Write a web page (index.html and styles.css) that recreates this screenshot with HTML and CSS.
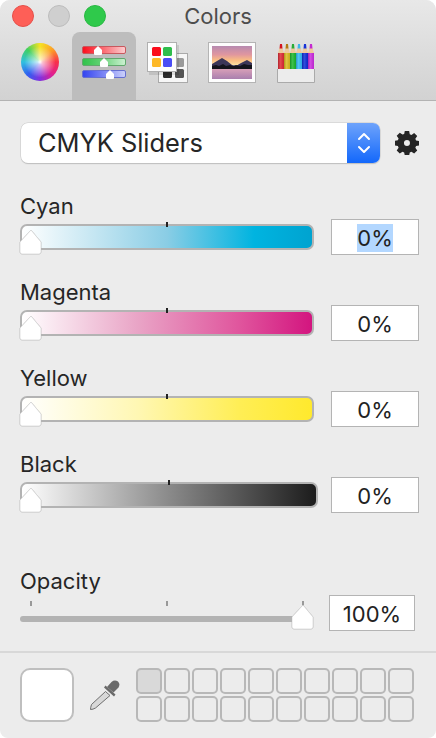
FILE: index.html
```html
<!DOCTYPE html>
<html lang="en">
<head>
<meta charset="utf-8">
<title>Colors</title>
<link rel="stylesheet" href="styles.css">
</head>
<body>
<main class="window">
  <header class="toolbar">
    <div class="titlebar">
      <div class="lights">
        <span class="light red"></span>
        <span class="light grey"></span>
        <span class="light green"></span>
      </div>
      <div class="title">Colors</div>
    </div>
    <nav class="tabs">
      <div class="tab tab-wheel"><span class="wheel"></span></div>
      <div class="tab tab-sliders active">
        <svg width="44" height="34" viewBox="0 0 44 34">
          <defs>
            <linearGradient id="r" x1="0" x2="1"><stop offset="0" stop-color="#fb0d1c"/><stop offset=".4" stop-color="#fb5a62"/><stop offset="1" stop-color="#fcd0d2"/></linearGradient>
            <linearGradient id="g" x1="0" x2="1"><stop offset="0" stop-color="#2fc24a"/><stop offset=".4" stop-color="#5ed070"/><stop offset="1" stop-color="#cdf1d2"/></linearGradient>
            <linearGradient id="b" x1="0" x2="1"><stop offset="0" stop-color="#3344f0"/><stop offset=".5" stop-color="#7d87f5"/><stop offset="1" stop-color="#cdd2fb"/></linearGradient>
          </defs>
          <rect x="0.5" y="0.5" width="43" height="7" rx="1.5" fill="url(#r)" stroke="#c8585e"/>
          <rect x="0.5" y="12.5" width="43" height="7" rx="1.5" fill="url(#g)" stroke="#62a86e"/>
          <rect x="0.5" y="24.5" width="43" height="7" rx="1.5" fill="url(#b)" stroke="#6670d0"/>
          <path d="M16 0l4 4v4a1 1 0 0 1-1 1h-6a1 1 0 0 1-1-1V4z" fill="#fff"/>
          <path d="M22 12l4 4v4a1 1 0 0 1-1 1h-6a1 1 0 0 1-1-1v-4z" fill="#fff"/>
          <path d="M28 24l4 4v4a1 1 0 0 1-1 1h-6a1 1 0 0 1-1-1v-4z" fill="#fff"/>
        </svg>
      </div>
      <div class="tab tab-palettes">
        <svg width="42" height="42" viewBox="0 0 42 42">
          <rect x="11.500" y="11.500" width="29" height="29" fill="#f6f6f6" stroke="#a9a9a9"/>
          <rect x="28" y="16" width="9" height="9" rx="1.500" fill="#9a9a9a"/>
          <rect x="16" y="27" width="9" height="9" rx="1.500" fill="#2c2c2c"/>
          <rect x="28" y="27" width="9" height="9" rx="1.500" fill="#555"/>
          <rect x="2" y="3" width="30" height="30" fill="#000" opacity=".1"/>
          <rect x="0.500" y="0.500" width="29" height="29" fill="#fdfdfd" stroke="#b0b0b0"/>
          <rect x="5" y="5" width="9" height="9" rx="1.500" fill="#fb0d1c"/>
          <rect x="16" y="5" width="9" height="9" rx="1.500" fill="#2fbd4c"/>
          <rect x="5" y="16" width="9" height="9" rx="1.500" fill="#fdb827"/>
          <rect x="16" y="16" width="9" height="9" rx="1.500" fill="#4a4df5"/>
        </svg>
      </div>
      <div class="tab tab-photo">
        <svg width="48" height="41" viewBox="0 0 48 41">
          <defs>
            <linearGradient id="sky" x1="0" x2="0" y1="0" y2="1">
              <stop offset="0" stop-color="#b78ab0"/><stop offset=".45" stop-color="#e0969f"/><stop offset=".75" stop-color="#f9bd82"/><stop offset="1" stop-color="#fce0a0"/>
            </linearGradient>
            <linearGradient id="lake" x1="0" x2="0" y1="0" y2="1">
              <stop offset="0" stop-color="#d8a0b8"/><stop offset="1" stop-color="#a97fae"/>
            </linearGradient>
          </defs>
          <rect x="0.500" y="0.500" width="47" height="40" fill="#fdfdfd" stroke="#b4b4b4"/>
          <rect x="4" y="4" width="40" height="19" fill="url(#sky)"/>
          <path d="M4 22l5-3 5-3 5 3 5 4 4 1 5-3 6-3 5 3v5H4z" fill="#3c3658"/>
          <path d="M4 24l4-1 3 1 4-2 3 2 4-1 3 1 3-1 4 1 4-2 4 1 4 0v4H4z" fill="#14141c"/>
          <rect x="4" y="27" width="40" height="10" fill="url(#lake)"/>
        </svg>
      </div>
      <div class="tab tab-pencils">
        <svg width="38" height="40" viewBox="0 0 38 40">
          <defs>
            <linearGradient id="shade" x1="0" x2="1"><stop offset="0" stop-color="#000" stop-opacity=".22"/><stop offset=".45" stop-color="#fff" stop-opacity=".15"/><stop offset="1" stop-color="#000" stop-opacity=".08"/></linearGradient>
          </defs>
          <path d="M1 9l1.500-5h3L7 9z" fill="#efc99c"/><path d="M2.500 4.500L3 0h2l.5 4.500z" fill="#d4141f"/><rect x="1" y="9" width="6" height="16" fill="#e02a34"/>
          <path d="M7 9l1.500-5h3L13 9z" fill="#efc99c"/><path d="M8.500 4.500L9 0h2l.5 4.500z" fill="#b27a12"/><rect x="7" y="9" width="6" height="16" fill="#dcbc20"/>
          <path d="M13 9l1.500-5h3L19 9z" fill="#efc99c"/><path d="M14.500 4.500L15 0h2l.5 4.500z" fill="#2aab37"/><rect x="13" y="9" width="6" height="16" fill="#1cb82d"/>
          <path d="M19 9l1.500-5h3L25 9z" fill="#efc99c"/><path d="M20.500 4.500L21 0h2l.5 4.500z" fill="#3fb7ea"/><rect x="19" y="9" width="6" height="16" fill="#34bcf6"/>
          <path d="M25 9l1.500-5h3L31 9z" fill="#efc99c"/><path d="M26.500 4.500L27 0h2l.5 4.500z" fill="#1833d6"/><rect x="25" y="9" width="6" height="16" fill="#0e2cd8"/>
          <path d="M31 9l1.500-5h3L37 9z" fill="#efc99c"/><path d="M32.500 4.500L33 0h2l.5 4.500z" fill="#c42ad0"/><rect x="31" y="9" width="6" height="16" fill="#cc2ce0"/>
          <rect x="1" y="9" width="6" height="16" fill="url(#shade)"/><rect x="7" y="9" width="6" height="16" fill="url(#shade)"/><rect x="13" y="9" width="6" height="16" fill="url(#shade)"/><rect x="19" y="9" width="6" height="16" fill="url(#shade)"/><rect x="25" y="9" width="6" height="16" fill="url(#shade)"/><rect x="31" y="9" width="6" height="16" fill="url(#shade)"/>
          <path d="M.500 25v13.500h37V25" fill="#ececec" stroke="#aaa"/>
          <rect x="1" y="25" width="36" height="13" fill="#ececec"/>
        </svg>
      </div>
    </nav>
  </header>

  <section class="content">
    <div class="mode-row">
      <div class="popup">
        <span class="popup-label">CMYK Sliders</span>
        <span class="stepper">
          <svg width="14" height="24" viewBox="0 0 14 24"><path d="M2 8l5-5 5 5M2 16l5 5 5-5" fill="none" stroke="#fff" stroke-width="2" stroke-linecap="round" stroke-linejoin="round"/></svg>
        </span>
      </div>
      <svg class="gear" width="24" height="24" viewBox="0 0 24 24"><path fill-rule="evenodd" fill="#252525" d="M9.800 0h4.400l.6 3.200 1.700.7 2.700-1.900 3.100 3.100-1.900 2.700.7 1.700 3 .6v4.400l-3 .6-.7 1.700 1.900 2.700-3.100 3.100-2.700-1.900-1.700.7-.6 3.200H9.800l-.6-3.200-1.700-.7-2.700 1.900-3.100-3.100 1.900-2.700-.7-1.700-3-.6V9.800l3-.6.7-1.700-1.900-2.700L4.800 1.700l2.700 1.900 1.700-.7zM12 9a3 3 0 1 0 0 6 3 3 0 0 0 0-6z"/></svg>
    </div>

    <div class="channels">
      <div class="channel">
        <div class="channel-label">Cyan</div>
        <div class="channel-row">
          <div class="track cyan"><i class="tick"></i><svg class="thumb" width="24" height="26" viewBox="0 0 24 26"><path d="M12 1l10 12v10a2 2 0 0 1-2 2H3a2 2 0 0 1-2-2V13z" fill="#fff" stroke="#d4d4d4" stroke-width=".7"/></svg></div>
          <div class="field"><span class="selected">0%</span></div>
        </div>
      </div>
      <div class="channel">
        <div class="channel-label">Magenta</div>
        <div class="channel-row">
          <div class="track magenta"><i class="tick"></i><svg class="thumb" width="24" height="26" viewBox="0 0 24 26"><path d="M12 1l10 12v10a2 2 0 0 1-2 2H3a2 2 0 0 1-2-2V13z" fill="#fff" stroke="#d4d4d4" stroke-width=".7"/></svg></div>
          <div class="field"><span>0%</span></div>
        </div>
      </div>
      <div class="channel">
        <div class="channel-label">Yellow</div>
        <div class="channel-row">
          <div class="track yellow"><i class="tick"></i><svg class="thumb" width="24" height="26" viewBox="0 0 24 26"><path d="M12 1l10 12v10a2 2 0 0 1-2 2H3a2 2 0 0 1-2-2V13z" fill="#fff" stroke="#d4d4d4" stroke-width=".7"/></svg></div>
          <div class="field"><span>0%</span></div>
        </div>
      </div>
      <div class="channel">
        <div class="channel-label">Black</div>
        <div class="channel-row">
          <div class="track black"><i class="tick"></i><svg class="thumb" width="24" height="26" viewBox="0 0 24 26"><path d="M12 1l10 12v10a2 2 0 0 1-2 2H3a2 2 0 0 1-2-2V13z" fill="#fff" stroke="#d4d4d4" stroke-width=".7"/></svg></div>
          <div class="field"><span>0%</span></div>
        </div>
      </div>
    </div>

    <div class="opacity">
      <div class="channel-label">Opacity</div>
      <div class="opacity-row">
        <div class="opacity-slider">
          <i class="op-tick t1"></i><i class="op-tick t2"></i><i class="op-tick t3"></i>
          <div class="op-track"></div>
          <svg class="op-thumb" width="24" height="26" viewBox="0 0 24 26"><path d="M12 1l10 12v10a2 2 0 0 1-2 2H3a2 2 0 0 1-2-2V13z" fill="#fff" stroke="#d4d4d4" stroke-width=".7"/></svg>
        </div>
        <div class="field op-field"><span>100%</span></div>
      </div>
    </div>
  </section>

  <footer class="footer">
    <div class="well"></div>
    <svg class="dropper" width="30" height="30" viewBox="0 0 30 30">
      <path d="M15.500 11.500L1.500 24.500Q.5 27.500 .5 29.500 3 29.500 5.500 28L20 15.500z" fill="#d8d8d8" stroke="#6e6e6e"/>
      <path d="M14 7.500L24 16.500 25.500 14.500 15.500 5.500z" fill="#6a6a6a"/>
      <path d="M17 7L21.500 2Q24.500-.5 28 1.500 30.500 4 28.500 7.500L23.500 12.500z" fill="#6a6a6a"/>
    </svg>
    <div class="swatches">
      <span class="swatch filled"></span><span class="swatch"></span><span class="swatch"></span><span class="swatch"></span><span class="swatch"></span><span class="swatch"></span><span class="swatch"></span><span class="swatch"></span><span class="swatch"></span><span class="swatch"></span>
      <span class="swatch"></span><span class="swatch"></span><span class="swatch"></span><span class="swatch"></span><span class="swatch"></span><span class="swatch"></span><span class="swatch"></span><span class="swatch"></span><span class="swatch"></span><span class="swatch"></span>
    </div>
  </footer>
</main>
</body>
</html>
```

FILE: styles.css
```css
* { box-sizing: border-box; }
html, body { margin: 0; padding: 0; background: #fff; }
body { width: 436px; height: 738px; overflow: hidden; font-family: Inter, "Liberation Sans", sans-serif; color: #262626; }
.window { width: 436px; height: 738px; background: #ececec; border-radius: 10px 10px 8px 8px; overflow: hidden; display: flex; flex-direction: column; }

.toolbar { height: 101px; background: linear-gradient(#e8e8e8, #d2d2d2); border-bottom: 1px solid #b3b3b3; flex: none; }
.titlebar { height: 32px; display: grid; grid-template-columns: 1fr auto 1fr; align-items: center; }
.lights { display: flex; gap: 14px; padding-left: 12px; }
.light { width: 22px; height: 22px; border-radius: 50%; }
.red { background: #fe5f57; border: 1px solid #e4504a; }
.grey { background: #cfcfcf; border: 1px solid #bcbcbc; }
.green { background: #2fc94b; border: 1px solid #29b843; }
.title { font-size: 22px; line-height: 32px; color: #4d4d4d; }

.tabs { display: flex; height: 68px; padding-left: 21px; }
.tab { display: flex; align-items: flex-start; }
.tab-wheel { width: 38px; margin-right: 13px; padding-top: 11px; }
.wheel { flex: none; width: 38px; height: 38px; border-radius: 50%; background: radial-gradient(circle, #fff 0, rgba(255,255,255,.7) 10%, rgba(255,255,255,0) 58%), conic-gradient(from 0deg, #f6e222, #fca028, #f8304a, #e02090, #8030e0, #3060f0, #30c0e0, #40d060, #f6e222); }
.tab-sliders { width: 64px; height: 68px; justify-content: center; padding-top: 14px; background: #bdbdbd; border-radius: 8px 8px 0 0; }
.tab-palettes { margin-left: 11px; padding-top: 10px; }
.tab-photo { margin-left: 19px; padding-top: 10px; }
.tab-pencils { margin-left: 21px; padding-top: 12px; }

.content { flex: 1; padding: 22px 17px 0 20px; }
.mode-row { display: flex; align-items: center; gap: 15px; height: 40px; padding-left: 1px; }
.popup { width: 360px; height: 40px; background: #fff; border-radius: 7px; box-shadow: 0 0 0 .5px #c8c8c8, 0 1px 1px #b9b9b9; display: flex; justify-content: space-between; align-items: center; overflow: hidden; }
.popup-label { font-size: 25.4px; padding: 0 0 2px 17px; color: #262626; }
.stepper { width: 33px; height: 40px; background: linear-gradient(#6ea3fb, #1368fb); display: flex; align-items: center; justify-content: center; }

.channels { margin-top: 28px; }
.channel { height: 86px; }
.channel-label { font-size: 22px; line-height: 30px; height: 28px; color: #262626; }
.channel-row { display: flex; align-items: flex-start; gap: 17px; }
.track { position: relative; width: 294px; height: 26px; margin-top: 5px; border-radius: 7px; border: 2px solid #b3b3b3; }
.cyan { background: linear-gradient(90deg, #fff, #8acde5 50%, #00b4e0 80%, #00a3d0); }
.magenta { background: linear-gradient(90deg, #fff, #e9a4c6 40%, #e0559d 75%, #d3157f); }
.yellow { background: linear-gradient(90deg, #fff, #fff7b3 40%, #ffee55 75%, #ffe92d); }
.black { background: linear-gradient(90deg, #fff, #8a8a8a 50%, #1c1c1c); width: 298px; margin-right: -4px; }
.tick { position: absolute; left: 144px; top: -4px; width: 2px; height: 5px; background: #222; }
.black .tick { left: 146px; }
.thumb { position: absolute; left: -3px; top: 3px; filter: drop-shadow(0 .5px .5px rgba(0,0,0,.25)); }
.field { width: 88px; height: 36px; padding-top: 2px; background: #fff; border: 1px solid #b4b4b4; display: flex; align-items: center; justify-content: center; font-size: 22px; color: #222; }
.selected { background: #b3d7ff; line-height: 28px; }

.opacity { margin-top: 32px; }
.opacity .channel-label { line-height: 28px; }
.opacity-row { display: flex; gap: 14px; }
.opacity-slider { position: relative; width: 295px; height: 36px; }
.op-track { position: absolute; left: 0; top: 21px; width: 275px; height: 6px; background: #b3b3b3; border-radius: 3px 0 0 3px; }
.op-tick { position: absolute; top: 6px; width: 2px; height: 5px; background: #999; }
.t1 { left: 10px; }
.t2 { left: 146px; }
.t3 { left: 282px; }
.op-thumb { position: absolute; left: 271px; top: 9px; filter: drop-shadow(0 .5px .5px rgba(0,0,0,.25)); }
.op-field { width: 86px; }

.footer { height: 87px; flex: none; border-top: 2px solid #d8d8d8; padding: 15px 0 0 20px; display: flex; align-items: flex-start; }
.well { width: 54px; height: 54px; background: #fff; border: 2px solid #bfbfbf; border-radius: 10px; }
.dropper { margin: 12px 16px 0 16px; }
.swatches { display: grid; grid-template-columns: repeat(10, 26px); grid-auto-rows: 26px; gap: 2px; }
.swatch { border: 2px solid #b8b8b8; border-radius: 5px; background: #ececec; }
.filled { background: #d9d9d9; }
```
